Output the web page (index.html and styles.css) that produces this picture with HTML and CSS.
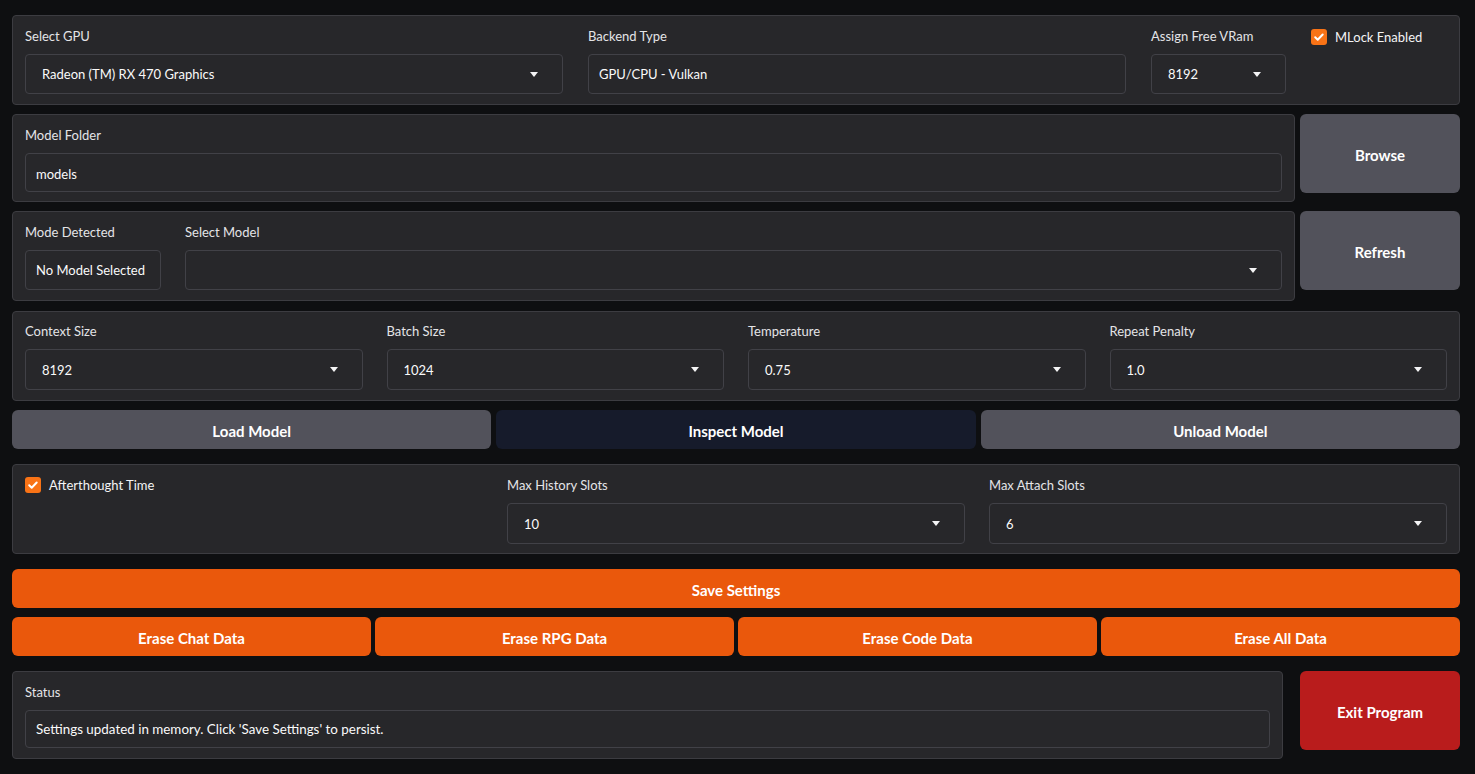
FILE: index.html
```html
<!DOCTYPE html>
<html>
<head>
<meta charset="utf-8">
<link rel="stylesheet" href="styles.css">
</head>
<body>
<div class="page">

  <div class="panel row1">
    <div class="field">
      <div class="label">Select GPU</div>
      <div class="dropdown tight"><span>Radeon (TM) RX 470 Graphics</span><span class="caret"></span></div>
    </div>
    <div class="field">
      <div class="label">Backend Type</div>
      <div class="textbox dd-h">GPU/CPU - Vulkan</div>
    </div>
    <div class="field">
      <div class="label">Assign Free VRam</div>
      <div class="dropdown"><span>8192</span><span class="caret"></span></div>
    </div>
    <div class="field">
      <label class="check mlock"><span class="box"><svg viewBox="0 0 16 16" width="16" height="16"><path d="M4.2 8.3l2.5 2.4 5-5.2" fill="none" stroke="#fff" stroke-width="2" stroke-linecap="round" stroke-linejoin="round"/></svg></span>MLock Enabled</label>
    </div>
  </div>

  <div class="split row2">
    <div class="panel grow">
      <div class="field">
        <div class="label">Model Folder</div>
        <div class="textbox folder">models</div>
      </div>
    </div>
    <div class="btn secondary side">Browse</div>
  </div>

  <div class="split row3">
    <div class="panel grow row3-inner">
      <div class="field mode">
        <div class="label">Mode Detected</div>
        <div class="textbox dd-h">No Model Selected</div>
      </div>
      <div class="field fill">
        <div class="label">Select Model</div>
        <div class="dropdown tall"><span></span><span class="caret"></span></div>
      </div>
    </div>
    <div class="btn secondary side">Refresh</div>
  </div>

  <div class="panel row4">
    <div class="field">
      <div class="label">Context Size</div>
      <div class="dropdown tall"><span>8192</span><span class="caret"></span></div>
    </div>
    <div class="field">
      <div class="label">Batch Size</div>
      <div class="dropdown tall"><span>1024</span><span class="caret"></span></div>
    </div>
    <div class="field">
      <div class="label">Temperature</div>
      <div class="dropdown tall"><span>0.75</span><span class="caret"></span></div>
    </div>
    <div class="field">
      <div class="label">Repeat Penalty</div>
      <div class="dropdown tall"><span>1.0</span><span class="caret"></span></div>
    </div>
  </div>

  <div class="btnrow row5">
    <div class="btn secondary">Load Model</div>
    <div class="btn dark">Inspect Model</div>
    <div class="btn secondary">Unload Model</div>
  </div>

  <div class="panel row6">
    <div class="field">
      <label class="check after"><span class="box"><svg viewBox="0 0 16 16" width="16" height="16"><path d="M4.2 8.3l2.5 2.4 5-5.2" fill="none" stroke="#fff" stroke-width="2" stroke-linecap="round" stroke-linejoin="round"/></svg></span>Afterthought Time</label>
    </div>
    <div class="field">
      <div class="label">Max History Slots</div>
      <div class="dropdown tall"><span>10</span><span class="caret"></span></div>
    </div>
    <div class="field">
      <div class="label">Max Attach Slots</div>
      <div class="dropdown tall"><span>6</span><span class="caret"></span></div>
    </div>
  </div>

  <div class="btn primary save">Save Settings</div>

  <div class="btnrow erase">
    <div class="btn primary">Erase Chat Data</div>
    <div class="btn primary">Erase RPG Data</div>
    <div class="btn primary">Erase Code Data</div>
    <div class="btn primary">Erase All Data</div>
  </div>

  <div class="split row9">
    <div class="panel status">
      <div class="field">
        <div class="label">Status</div>
        <div class="textbox status-text">Settings updated in memory. Click 'Save Settings' to persist.</div>
      </div>
    </div>
    <div class="btn stop side">Exit Program</div>
  </div>

</div>
</body>
</html>
```

FILE: styles.css
```css
* { box-sizing: border-box; }
html, body {
  margin: 0;
  background: #0e0f11;
  color: #f4f4f5;
  font-family: "Lato", "Noto Sans", sans-serif;
  font-size: 13px;
}
.page {
  width: 1475px;
  padding: 15px 15px 0 12px;
  display: flex;
  flex-direction: column;
}
.panel {
  background: #27272a;
  border: 1px solid #3c3c41;
  border-radius: 4px;
  padding: 11px 12px 10px 12px;
}
.field { display: flex; flex-direction: column; min-width: 0; }
.label {
  color: #e4e4e7;
  font-size: 13px;
  line-height: 18px;
  height: 18px;
  margin-bottom: 9px;
}
.textbox, .dropdown {
  background: #27272a;
  border: 1px solid #414147;
  border-radius: 4px;
  height: 38px;
  display: flex;
  align-items: center;
  padding: 0 10px;
  color: #fafafa;
  font-size: 13px;
  white-space: nowrap;
}
.textbox.folder { height: 39px; padding-top: 2px; }
.status-text { font-size: 13.4px; }
.dd-h { height: 40px; }
.dropdown {
  height: 40px;
  padding: 0 24px 0 16px;
  justify-content: space-between;
}
.dropdown.tall { height: 41px; }
.dropdown.tight { padding-left: 16px; }
.caret {
  width: 0; height: 0;
  border-left: 4.5px solid transparent;
  border-right: 4.5px solid transparent;
  border-top: 5px solid #f4f4f5;
}
.row1 {
  display: grid;
  grid-template-columns: 538px 538px 135px 1fr;
  column-gap: 25px;
  height: 90px;
}
.check {
  display: flex;
  align-items: center;
  gap: 8px;
  font-size: 13px;
  line-height: 18px;
  color: #f4f4f5;
}
.check.mlock { margin-top: 1px; }
.check.after { margin-top: 0; }
.box {
  width: 16px; height: 16px;
  border-radius: 3px;
  background: #f97316;
  display: flex;
}
.split { display: flex; align-items: flex-start; }
.grow { flex: 1; }
.side {
  width: 160px;
  height: 79px;
  margin-left: 5px;
  flex: none;
}
.row2 { margin-top: 9px; }
.row2 .panel { height: 88px; }
.row3 { margin-top: 9px; }
.row3-inner {
  display: flex;
  gap: 24px;
  height: 90px;
}
.mode { width: 136px; flex: none; }
.fill { flex: 1; }
.row4 {
  margin-top: 10px;
  display: grid;
  grid-template-columns: repeat(4, 1fr);
  column-gap: 24px;
  height: 90px;
  padding-top: 10px;
}
.btn {
  display: flex;
  align-items: center;
  justify-content: center;
  font-weight: 700;
  font-size: 15px;
  color: #fff;
  border-radius: 6px;
  padding-top: 2px;
}
.secondary { background: #52525b; }
.dark { background: #161b2b; }
.primary { background: #ea580c; }
.stop { background: #b91c1c; }
.btnrow { display: flex; gap: 5px; }
.btnrow .btn { flex: 1; height: 39px; }
.row5 { margin-top: 9px; }
.row6 {
  margin-top: 15px;
  display: grid;
  grid-template-columns: repeat(3, 1fr);
  column-gap: 24px;
  height: 90px;
  padding-top: 11px;
}
.save { margin-top: 15px; height: 39px; }
.erase { margin-top: 9px; gap: 4px; }
.row9 { margin-top: 15px; }
.status { width: 1271px; height: 88px; flex: none; }
.row9 .side { margin-left: 17px; }
```
